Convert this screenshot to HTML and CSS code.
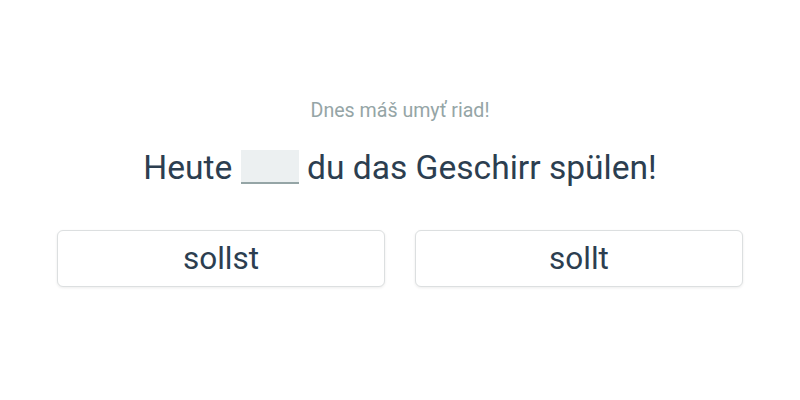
FILE: index.html
```html
<!DOCTYPE html>
<html lang="de">
<head>
<meta charset="utf-8">
<title>Quiz</title>
<link rel="stylesheet" href="styles.css">
</head>
<body>
<main class="quiz">
  <p class="hint">Dnes máš umyť riad!</p>
  <p class="sentence">Heute <span class="blank"></span> du das Geschirr spülen!</p>
  <div class="options">
    <button class="option">sollst</button>
    <button class="option">sollt</button>
  </div>
</main>
</body>
</html>
```
FILE: styles.css
```css
* { box-sizing: border-box; }
html, body {
  margin: 0;
  padding: 0;
  background: #ffffff;
  width: 800px;
  height: 400px;
  overflow: hidden;
  font-family: Roboto, "Noto Sans", Arial, sans-serif;
}
.quiz {
  display: flex;
  flex-direction: column;
  align-items: center;
  padding: 99px 57px 0;
}
.hint {
  margin: 0;
  font-size: 19.6px;
  line-height: 24px;
  color: #95a5a6;
}
.sentence {
  margin: 25px 0 0;
  font-size: 33.6px;
  line-height: 40px;
  color: #2c3e50;
}
.blank {
  display: inline-block;
  width: 58px;
  height: 34px;
  background: #ecf0f1;
  border-bottom: 2px solid #95a5a6;
  vertical-align: -5px;
}
.options {
  margin-top: 42px;
  width: 100%;
  display: grid;
  grid-template-columns: 1fr 1fr;
  gap: 30px;
}
.option {
  height: 57px;
  background: #ffffff;
  border: 1px solid #dcdfe0;
  border-radius: 6px;
  box-shadow: 0 1px 3px rgba(0,0,0,0.08);
  font-family: Roboto, "Noto Sans", Arial, sans-serif;
  font-size: 31.5px;
  color: #2c3e50;
  display: flex;
  align-items: center;
  justify-content: center;
  padding: 0;
  cursor: pointer;
}
```
